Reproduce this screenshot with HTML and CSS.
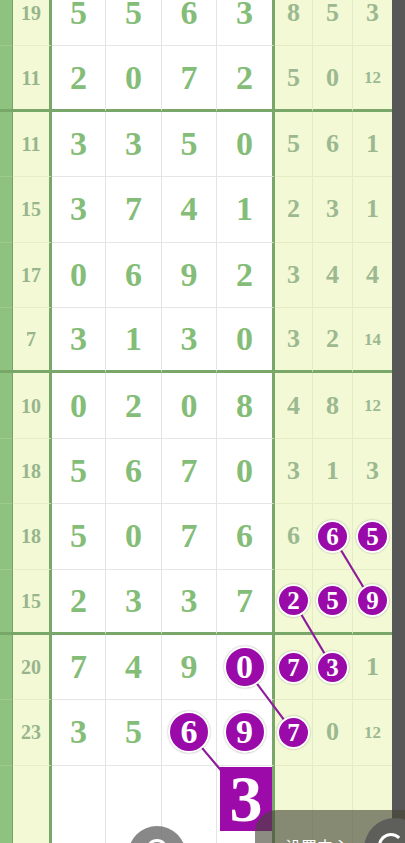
FILE: index.html
```html
<!DOCTYPE html>
<html>
<head>
<meta charset="utf-8">
<link rel="stylesheet" href="styles.css">
</head>
<body>
<div class="page">
  <div class="board">
    <div class="row"><div class="c strip"></div><div class="c side">19</div><div class="c main">5</div><div class="c main">5</div><div class="c main">6</div><div class="c main last">3</div><div class="c sub">8</div><div class="c sub">5</div><div class="c sub end">3</div></div>
    <div class="row group-end"><div class="c strip"></div><div class="c side">11</div><div class="c main">2</div><div class="c main">0</div><div class="c main">7</div><div class="c main last">2</div><div class="c sub">5</div><div class="c sub">0</div><div class="c sub end small">12</div></div>

    <div class="row"><div class="c strip"></div><div class="c side">11</div><div class="c main">3</div><div class="c main">3</div><div class="c main">5</div><div class="c main last">0</div><div class="c sub">5</div><div class="c sub">6</div><div class="c sub end">1</div></div>
    <div class="row"><div class="c strip"></div><div class="c side">15</div><div class="c main">3</div><div class="c main">7</div><div class="c main">4</div><div class="c main last">1</div><div class="c sub">2</div><div class="c sub">3</div><div class="c sub end">1</div></div>
    <div class="row"><div class="c strip"></div><div class="c side">17</div><div class="c main">0</div><div class="c main">6</div><div class="c main">9</div><div class="c main last">2</div><div class="c sub">3</div><div class="c sub">4</div><div class="c sub end">4</div></div>
    <div class="row group-end"><div class="c strip"></div><div class="c side">7</div><div class="c main">3</div><div class="c main">1</div><div class="c main">3</div><div class="c main last">0</div><div class="c sub">3</div><div class="c sub">2</div><div class="c sub end small">14</div></div>

    <div class="row"><div class="c strip"></div><div class="c side">10</div><div class="c main">0</div><div class="c main">2</div><div class="c main">0</div><div class="c main last">8</div><div class="c sub">4</div><div class="c sub">8</div><div class="c sub end small">12</div></div>
    <div class="row"><div class="c strip"></div><div class="c side">18</div><div class="c main">5</div><div class="c main">6</div><div class="c main">7</div><div class="c main last">0</div><div class="c sub">3</div><div class="c sub">1</div><div class="c sub end">3</div></div>
    <div class="row"><div class="c strip"></div><div class="c side">18</div><div class="c main">5</div><div class="c main">0</div><div class="c main">7</div><div class="c main last">6</div><div class="c sub">6</div><div class="c sub"><span class="ball">6</span></div><div class="c sub end"><span class="ball">5</span></div></div>
    <div class="row group-end"><div class="c strip"></div><div class="c side">15</div><div class="c main">2</div><div class="c main">3</div><div class="c main">3</div><div class="c main last">7</div><div class="c sub"><span class="ball">2</span></div><div class="c sub"><span class="ball">5</span></div><div class="c sub end"><span class="ball">9</span></div></div>

    <div class="row"><div class="c strip"></div><div class="c side">20</div><div class="c main">7</div><div class="c main">4</div><div class="c main">9</div><div class="c main last"><span class="ball big">0</span></div><div class="c sub"><span class="ball">7</span></div><div class="c sub"><span class="ball">3</span></div><div class="c sub end">1</div></div>
    <div class="row"><div class="c strip"></div><div class="c side">23</div><div class="c main">3</div><div class="c main">5</div><div class="c main"><span class="ball big">6</span></div><div class="c main last"><span class="ball big">9</span></div><div class="c sub"><span class="ball">7</span></div><div class="c sub">0</div><div class="c sub end small">12</div></div>
    <div class="row"><div class="c strip"></div><div class="c side"></div><div class="c main"></div><div class="c main"></div><div class="c main"></div><div class="c main last sq-cell"><span class="sq">3</span></div><div class="c sub"></div><div class="c sub"></div><div class="c sub end"></div></div>
    <div class="row"><div class="c strip"></div><div class="c side"></div><div class="c main"></div><div class="c main"></div><div class="c main"></div><div class="c main last"></div><div class="c sub"></div><div class="c sub"></div><div class="c sub end"></div></div>

    <svg class="links" width="392" height="920" viewBox="0 0 392 920">
      <line x1="333" y1="556" x2="372.5" y2="621.3"/>
      <line x1="294" y1="621.3" x2="333" y2="686.7"/>
      <line x1="245" y1="686.7" x2="294" y2="752.1"/>
      <line x1="189.5" y1="752.1" x2="246" y2="819"/>
    </svg>
  </div>
  <div class="rail"></div>

  <div class="fab-left"><span class="fab-icon"></span></div>
  <div class="panel"><span class="panel-text">设置中心</span></div>
  <div class="fab-right"><span class="fab-icon2"></span></div>
</div>
</body>
</html>
```

FILE: styles.css
```css
* { box-sizing: border-box; }
html, body { margin: 0; padding: 0; }
body { width: 405px; height: 843px; overflow: hidden; background: #fff; }

.page {
  position: relative;
  display: flex;
  width: 405px;
  height: 843px;
  overflow: hidden;
}

.board {
  position: relative;
  width: 392px;
  margin-top: -19px;
  flex: none;
}

.rail {
  flex: 1;
  background: #575757;
}

.row {
  display: grid;
  grid-template-columns: 13px 39px 54px 56px 55px 58px 38px 40px 39px;
  height: 65.4px;
}

.c {
  display: flex;
  align-items: center;
  justify-content: center;
  font-family: "Liberation Serif", "Times New Roman", serif;
  font-weight: 700;
  line-height: 1;
  border-bottom: 1px solid #e6e6e6;
}

.strip {
  background: #8fc27f;
  border-right: 1px solid #74a465;
  border-bottom-color: #9ccb8c;
}

.side {
  background: #f2f9d4;
  border-right: 3px solid #79a76a;
  border-bottom-color: #e4eecb;
  color: #97b58d;
  font-size: 20px;
}

.main {
  background: #fff;
  border-right: 1px solid #e4e4e4;
  color: #84bd77;
  font-size: 34px;
}

.main.last {
  border-right: 3px solid #79a76a;
}

.sub {
  background: #f2f9d4;
  border-right: 1px solid #e2edc8;
  border-bottom-color: #e2edc8;
  color: #9cb891;
  font-size: 26px;
}

.sub.end { border-right: none; }
.sub.small { font-size: 17px; }

.row.group-end .c {
  border-bottom: 3px solid #79a76a;
}

.ball {
  position: relative;
  z-index: 2;
  display: flex;
  align-items: center;
  justify-content: center;
  width: 33px;
  height: 33px;
  border-radius: 50%;
  background: #9a0aa9;
  border: 2px solid #fff;
  box-shadow: 0 0 2px rgba(0, 0, 0, 0.35);
  color: #fff;
  font-size: 25px;
  font-weight: 700;
}

.ball.big {
  width: 42px;
  height: 42px;
  font-size: 34px;
}

.sq-cell {
  justify-content: flex-start;
  align-items: flex-start;
  padding-top: 1px;
}

.sq {
  position: relative;
  z-index: 2;
  display: flex;
  align-items: center;
  justify-content: center;
  width: 52px;
  height: 64px;
  margin-left: 3px;
  background: #9c0aaa;
  color: #fff;
  font-size: 66px;
  font-weight: 700;
}

.links {
  position: absolute;
  left: 0;
  top: 0;
  z-index: 1;
  pointer-events: none;
}

.links line {
  stroke: #8e1a9c;
  stroke-width: 2.2;
}

.fab-left {
  position: absolute;
  left: 128px;
  top: 826px;
  width: 58px;
  height: 58px;
  border-radius: 50%;
  background: rgba(115, 115, 115, 0.85);
  z-index: 5;
}

.fab-icon {
  position: absolute;
  left: 18px;
  top: 13px;
  width: 22px;
  height: 22px;
  border: 3px solid #fff;
  border-radius: 50%;
}

.panel {
  position: absolute;
  left: 255px;
  top: 810px;
  width: 170px;
  height: 70px;
  border-radius: 22px;
  background: rgba(70, 70, 55, 0.62);
  z-index: 4;
}

.panel-text {
  position: absolute;
  left: 30px;
  top: 28px;
  color: #fff;
  font-family: "Noto Sans CJK SC", "Noto Sans", sans-serif;
  font-size: 16px;
  line-height: 1;
  white-space: nowrap;
}

.fab-right {
  position: absolute;
  left: 364px;
  top: 818px;
  width: 62px;
  height: 62px;
  border-radius: 50%;
  background: #5e5e5a;
  z-index: 6;
}

.fab-icon2 {
  position: absolute;
  left: 14px;
  top: 15px;
  width: 26px;
  height: 26px;
  border: 3px solid #fff;
  border-right-color: transparent;
  border-radius: 50%;
}
```
